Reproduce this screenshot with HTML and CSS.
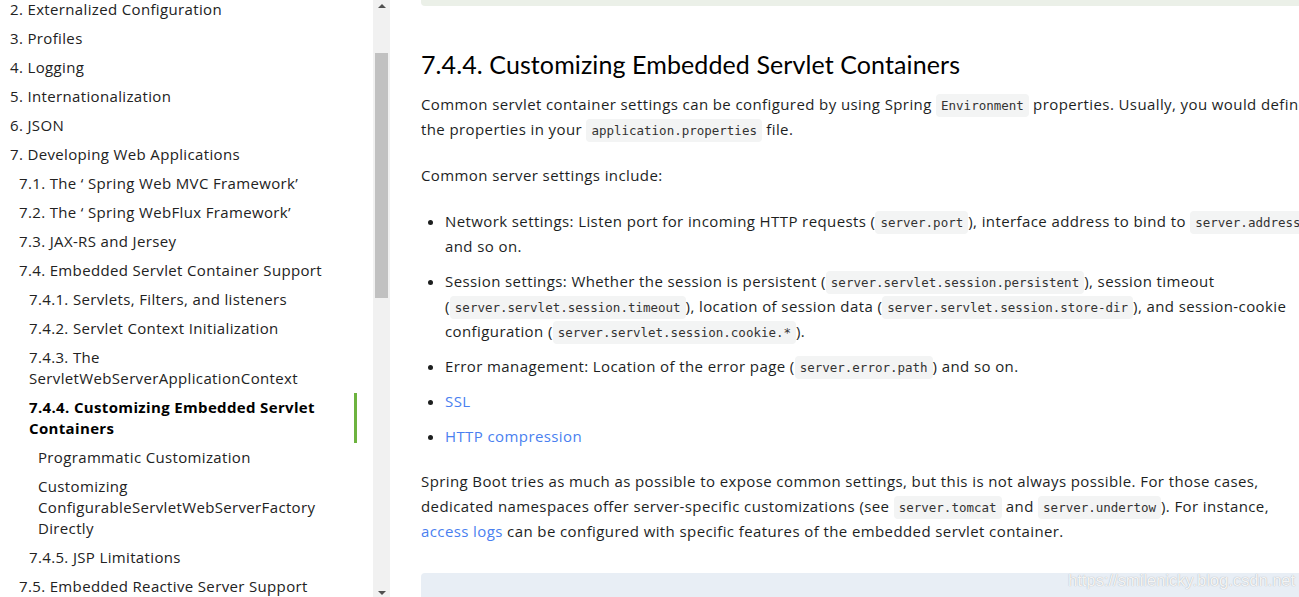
FILE: index.html
```html
<!DOCTYPE html>
<html lang="en">

<head>
    <meta charset="UTF-8">
    <meta name="viewport" content="width=device-width, initial-scale=1.0">
    <title>Spring Boot Features - Customizing Embedded Servlet Containers</title>

    <link rel="stylesheet" href="styles.css">
</head>

<body>
    <nav class="toc">
        <ul class="toc-list">
            <li class="lvl1">2. Externalized Configuration</li>
            <li class="lvl1">3. Profiles</li>
            <li class="lvl1">4. Logging</li>
            <li class="lvl1">5. Internationalization</li>
            <li class="lvl1">6. JSON</li>
            <li class="lvl1">7. Developing Web Applications</li>
            <li class="lvl2">7.1. The ‘ Spring Web MVC Framework’</li>
            <li class="lvl2">7.2. The ‘ Spring WebFlux Framework’</li>
            <li class="lvl2">7.3. JAX-RS and Jersey</li>
            <li class="lvl2">7.4. Embedded Servlet Container Support</li>
            <li class="lvl3">7.4.1. Servlets, Filters, and listeners</li>
            <li class="lvl3">7.4.2. Servlet Context Initialization</li>
            <li class="lvl3">7.4.3. The ServletWebServerApplicationContext</li>
            <li class="lvl3 active">7.4.4. Customizing Embedded Servlet Containers</li>
            <li class="lvl4">Programmatic Customization</li>
            <li class="lvl4">Customizing ConfigurableServletWebServerFactory Directly</li>
            <li class="lvl3">7.4.5. JSP Limitations</li>
            <li class="lvl2">7.5. Embedded Reactive Server Support</li>
        </ul>
        <div class="scrollbar">
            <span class="arrow up"></span>
            <span class="thumb"></span>
            <span class="arrow down"></span>
        </div>
    </nav>

    <main class="content">
        <div class="doc">
            <div class="listing top"></div>

            <h3>7.4.4. Customizing Embedded Servlet Containers</h3>

            <p>Common servlet container settings can be configured by using Spring <code>Environment</code> properties. Usually, you would define<br>
                the properties in your <code>application.properties</code> file.</p>

            <p>Common server settings include:</p>

            <ul class="settings">
                <li>Network settings: Listen port for incoming HTTP requests (<code>server.port</code>), interface address to bind to <code>server.address</code>,<br>
                    and so on.</li>
                <li>Session settings: Whether the session is persistent (<code>server.servlet.session.persistent</code>), session timeout<br>
                    (<code>server.servlet.session.timeout</code>), location of session data (<code>server.servlet.session.store-dir</code>), and session-cookie<br>
                    configuration (<code>server.servlet.session.cookie.*</code>).</li>
                <li>Error management: Location of the error page (<code>server.error.path</code>) and so on.</li>
                <li><a href="#">SSL</a></li>
                <li><a href="#">HTTP compression</a></li>
            </ul>

            <p>Spring Boot tries as much as possible to expose common settings, but this is not always possible. For those cases,<br>
                dedicated namespaces offer server-specific customizations (see <code>server.tomcat</code> and <code>server.undertow</code>). For instance,<br>
                <a href="#">access logs</a> can be configured with specific features of the embedded servlet container.</p>

            <div class="listing bottom">
                <span class="watermark">https://smilenicky.blog.csdn.net</span>
            </div>
        </div>
    </main>
</body>

</html>
```

FILE: styles.css
```css
body {
    margin: 0;
    height: 597px;
    overflow: hidden;
    display: flex;
    background-color: #ffffff;
    font-family: 'Open Sans', sans-serif;
    color: #1d1f1f;
}

/* левая колонка с оглавлением */
.toc {
    display: flex;
    flex-shrink: 0;
    width: 390px;
    height: 597px;
}

.toc-list {
    list-style: none;
    margin: -1px 0 0 0;
    padding: 0;
    width: 373px;
    font-size: 15px;
    letter-spacing: 0.35px;
    line-height: 21px;
    color: #222222;
}

.toc-list li {
    margin-bottom: 8px;
    padding-right: 36px;
}

.toc-list .lvl1 {
    padding-left: 10px;
}

.toc-list .lvl2 {
    padding-left: 19px;
}

.toc-list .lvl3 {
    padding-left: 29px;
}

.toc-list .lvl4 {
    padding-left: 38px;
}

.toc-list .active {
    font-weight: bold;
    color: #000000;
    border-right: 3px solid #6db33f;
    margin: -4px 16px 4px 0;
    padding-top: 4px;
    padding-bottom: 4px;
    padding-right: 20px;
}

.scrollbar {
    width: 17px;
    height: 597px;
    background-color: #f1f1f1;
    display: flex;
    flex-direction: column;
    align-items: center;
}

.scrollbar .thumb {
    width: 13px;
    height: 245px;
    margin-top: 45px;
    background-color: #c1c1c1;
}

.scrollbar .arrow {
    width: 0;
    height: 0;
    border-left: 4px solid transparent;
    border-right: 4px solid transparent;
}

.scrollbar .up {
    margin-top: 4px;
    border-bottom: 4px solid #505050;
}

.scrollbar .down {
    margin-top: auto;
    margin-bottom: 2px;
    border-top: 4px solid #505050;
}

/* основной текст */
.content {
    flex: 1;
    overflow: hidden;
    padding-left: 31px;
}

.doc {
    width: 1000px;
    font-size: 15px;
    letter-spacing: 0.4px;
    line-height: 25px;
}

.listing {
    background-color: #ebf0e8;
    border-radius: 0 0 4px 4px;
}

.listing.top {
    height: 6px;
}

.listing.bottom {
    height: 40px;
    margin-top: 29px;
    background-color: #e8eef5;
    border-radius: 4px 0 0 0;
    position: relative;
}

.watermark {
    position: absolute;
    left: 647px;
    top: -5px;
    font-family: 'Liberation Sans', Arial, sans-serif;
    font-size: 16.5px;
    letter-spacing: 0;
    color: rgba(255, 255, 255, 0.9);
    text-shadow: 0 0 1px rgba(0, 0, 0, 0.35);
}

h3 {
    margin: 43px 0 13px 0;
    font-family: Lato, sans-serif;
    font-weight: 400;
    font-size: 25px;
    letter-spacing: 0.1px;
    line-height: 30px;
    color: #000000;
}

p {
    margin: 0 0 21px 0;
}

code {
    font-family: 'DejaVu Sans Mono', monospace;
    font-size: 12.5px;
    letter-spacing: 0;
    line-height: 1;
    color: #333333;
    background-color: #f3f4f4;
    border-radius: 4px;
    padding: 4px 5px;
}

a {
    color: #4a7ff0;
    text-decoration: none;
}

.settings {
    margin: 0 0 20px 0;
    padding-left: 24px;
}

.settings li {
    margin-bottom: 10px;
}
```
